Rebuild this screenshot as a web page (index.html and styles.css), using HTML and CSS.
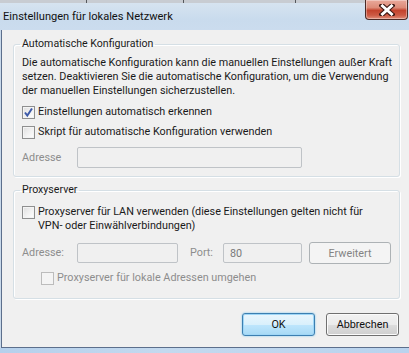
FILE: index.html
```html
<!DOCTYPE html>
<html lang="de">
<head>
<meta charset="utf-8">
<title>Einstellungen für lokales Netzwerk</title>
<link rel="stylesheet" href="styles.css">
</head>
<body>
<div class="window">
  <div class="bgstrip">
    <span class="seg s1"></span><span class="seg s2"></span><span class="seg s3"></span><span class="seg s4"></span><span class="seg s5"></span>
  </div>
  <div class="titlebar">
    <div class="title">Einstellungen für lokales Netzwerk</div>
  </div>
  <div class="close">
    <svg width="16" height="12" viewBox="0 0 16 12">
      <path d="M3 1.5 L13 10.5 M13 1.5 L3 10.5" stroke="#3a1510" stroke-width="5" stroke-linecap="square" fill="none"/>
      <path d="M3.5 2 L12.5 10 M12.5 2 L3.5 10" stroke="#ffffff" stroke-width="3" stroke-linecap="square" fill="none"/>
    </svg>
  </div>
  <div class="client">
    <fieldset class="group group-auto">
      <legend>Automatische Konfiguration</legend>
      <p class="desc">Die automatische Konfiguration kann die manuellen Einstellungen außer Kraft<br>setzen. Deaktivieren Sie die automatische Konfiguration, um die Verwendung<br>der manuellen Einstellungen sicherzustellen.</p>
      <label class="check-row row-detect">
        <span class="cb checked">
          <svg width="11" height="11" viewBox="0 0 11 11"><path d="M2 5.5 L4.3 8.5 L9 1.5" stroke="#3d5aa8" stroke-width="2" fill="none" stroke-linejoin="miter"/></svg>
        </span>
        <span class="cb-text">Einstellungen automatisch erkennen</span>
      </label>
      <label class="check-row row-script">
        <span class="cb"></span>
        <span class="cb-text">Skript für automatische Konfiguration verwenden</span>
      </label>
      <div class="field-row row-addr1">
        <span class="lbl disabled lbl-addr1">Adresse</span>
        <span class="input input-addr1"></span>
      </div>
    </fieldset>

    <fieldset class="group group-proxy">
      <legend>Proxyserver</legend>
      <label class="check-row row-lan">
        <span class="cb"></span>
        <span class="cb-text">Proxyserver für LAN verwenden (diese Einstellungen gelten nicht für<br>VPN- oder Einwählverbindungen)</span>
      </label>
      <div class="field-row row-addr2">
        <span class="lbl disabled lbl-addr2">Adresse:</span>
        <span class="input input-addr2"></span>
        <span class="lbl disabled lbl-port">Port:</span>
        <span class="input input-port">80</span>
        <span class="btn btn-disabled">Erweitert</span>
      </div>
      <label class="check-row row-bypass">
        <span class="cb cb-disabled"></span>
        <span class="cb-text disabled">Proxyserver für lokale Adressen umgehen</span>
      </label>
    </fieldset>

    <div class="actions">
      <button class="btn btn-ok">OK</button>
      <button class="btn btn-cancel">Abbrechen</button>
    </div>
  </div>
  <div class="bottomframe"></div>
</div>
</body>
</html>
```

FILE: styles.css
```css
* { box-sizing: border-box; }
html, body { margin: 0; padding: 0; }
body {
  width: 409px;
  height: 353px;
  overflow: hidden;
  font-family: Roboto, "Noto Sans", sans-serif;
  font-size: 10.8px;
  color: #000;
}
.window {
  position: relative;
  width: 409px;
  height: 353px;
  display: flex;
  flex-direction: column;
  background: linear-gradient(90deg, #c9d9ea 0%, #d3e0ee 30%, #c6d7ea 60%, #cfdeee 100%);
}
.bgstrip {
  height: 3px;
  display: flex;
  background: #c8ccd2;
  flex: none;
}
.seg { height: 3px; border-right: 1px solid #55585c; }
.s1 { width: 87px; }
.s2 { width: 97px; }
.s3 { width: 112px; }
.s4 { width: 83px; }
.s5 { width: 18px; }
.titlebar {
  height: 27px;
  flex: none;
  background: linear-gradient(180deg, #d6e3f0 0%, #c9dbed 60%, #cbdcee 100%);
}
.title {
  padding: 6px 0 0 3px;
  font-size: 11.1px;
  line-height: 16px;
  color: #111;
}
.close {
  position: absolute;
  left: 365px;
  top: 0;
  width: 43px;
  height: 20px;
  border: 1px solid #4a2a26;
  border-top: none;
  border-radius: 0 0 4px 4px;
  background: linear-gradient(180deg, #e9a99b 0%, #dd8b78 40%, #c3432d 55%, #cc5a44 80%, #e08d79 100%);
  box-shadow: inset 0 0 0 1px rgba(255,255,255,0.35);
  display: flex;
  align-items: center;
  justify-content: center;
}
.client {
  flex: 1;
  margin-left: 1px;
  border-left: 1px solid #5c6f8c;
  border-bottom: 1px solid #5c6f8c;
  background: #f0f0f0;
  padding: 6px 0 0 11px;
  display: flex;
  flex-direction: column;
}
.bottomframe {
  height: 5px;
  flex: none;
  background: linear-gradient(90deg, #b5d0ec, #c3d9ef 40%, #b9d3ee);
}
.group {
  margin: 0;
  width: 387px;
  border: 1px solid #d5dfe5;
  border-radius: 3px;
  box-shadow: inset 1px 1px 0 #fff, 1px 1px 0 #fff;
  padding: 0 8px 0 8px;
  min-inline-size: 0;
}
.group legend {
  padding: 0 2px;
  margin-left: -2px;
  font-size: 10.6px;
  line-height: 16px;
  color: #1a1a1a;
}
.group-auto { height: 141px; padding-top: 4px; }
.group-proxy { height: 117px; margin-top: 5px; padding-top: 7px; }
.desc {
  margin: 0;
  line-height: 14px;
  color: #1a1a1a;
  white-space: nowrap;
}
.check-row {
  display: flex;
  align-items: flex-start;
  line-height: 14px;
  color: #1a1a1a;
  white-space: nowrap;
}
.cb {
  flex: none;
  width: 13px;
  height: 13px;
  margin-top: 1px;
  margin-right: 3px;
  border: 1px solid #8e8f8f;
  background: linear-gradient(135deg, #dedede 0%, #f4f4f4 60%, #ffffff 100%);
  box-shadow: inset 0 0 0 1px #f4f4f4;
  display: flex;
  align-items: center;
  justify-content: center;
}
.cb.checked svg { display: block; }
.cb-disabled {
  border-color: #bcbcbc;
  background: #f4f4f4;
}
.row-detect { margin-top: 7px; }
.row-script { margin-top: 6px; }
.row-lan { margin-top: 0; }
.row-bypass { margin-top: 7px; margin-left: 19px; }
.disabled { color: #8d8d8d; }
.field-row {
  display: flex;
  align-items: center;
}
.row-addr1 { margin-top: 8px; }
.row-addr2 { margin-top: 9px; }
.lbl { line-height: 14px; }
.lbl-addr1, .lbl-addr2 { width: 55px; }
.input {
  height: 21px;
  border: 1px solid #bfc3c7;
  border-radius: 2px;
  background: #f0f0f0;
  color: #7a7a7a;
  line-height: 19px;
  padding-left: 6px;
}
.input-addr1 { width: 225px; }
.input-addr2 { width: 101px; height: 20px; }
.lbl-port { margin-left: 12px; width: 33px; }
.input-port { width: 79px; height: 20px; }
.btn {
  font-family: inherit;
  font-size: 10.8px;
  height: 22px;
  border-radius: 3px;
  display: flex;
  align-items: center;
  justify-content: center;
  padding: 0;
}
.btn-disabled {
  margin-left: 7px;
  width: 82px;
  border: 1px solid #adb2b5;
  background: #f4f4f4;
  color: #838383;
}
.actions {
  display: flex;
  justify-content: flex-end;
  gap: 11px;
  margin-top: 14px;
  width: 386px;
}
.btn-ok, .btn-cancel {
  width: 73px;
  height: 23px;
  color: #111;
}
.btn-ok {
  border: 1px solid #3c7fb1;
  background: linear-gradient(180deg, #eaf6fd 0%, #d9f0fc 50%, #bee6fd 51%, #a7d9f5 100%);
  box-shadow: inset 0 0 0 1px #9fd6f6, 0 0 2px #6bc3ef;
}
.btn-cancel {
  border: 1px solid #707070;
  background: linear-gradient(180deg, #f2f2f2 0%, #ebebeb 50%, #dddddd 51%, #cfcfcf 100%);
  box-shadow: inset 0 0 0 1px #fbfbfb;
}
```
